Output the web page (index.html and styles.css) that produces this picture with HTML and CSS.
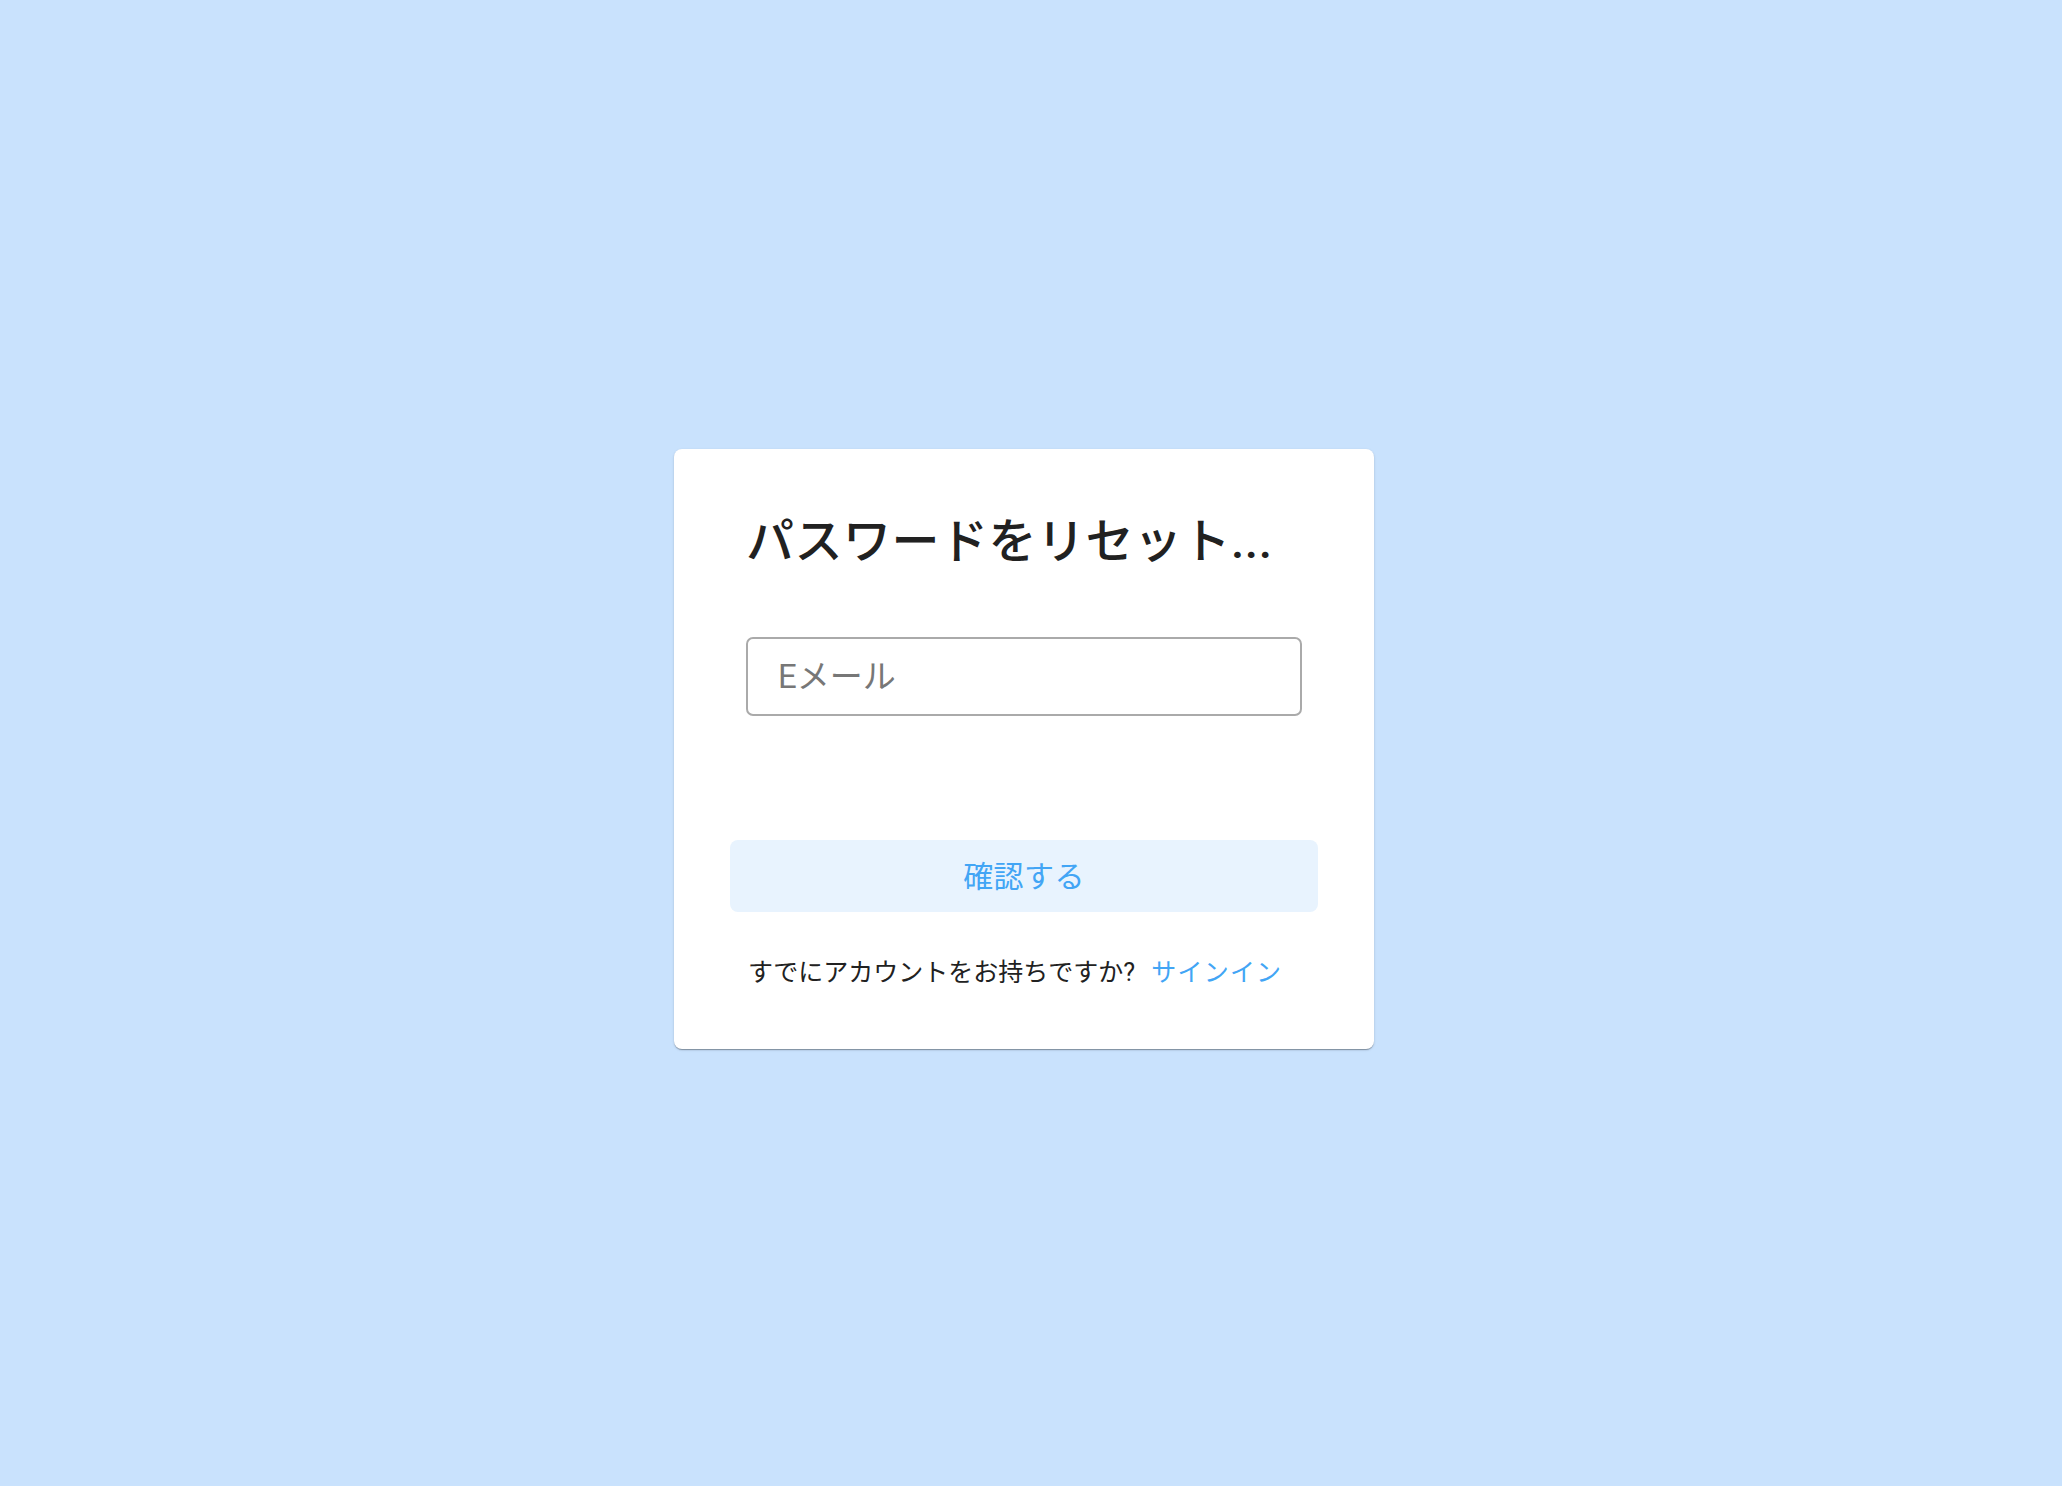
FILE: index.html
```html
<!DOCTYPE html>
<html lang="ja">
<head>
<meta charset="utf-8">
<title>パスワードをリセット</title>
<link rel="stylesheet" href="styles.css">
</head>
<body>
<main class="page">
  <section class="card">
    <h1 class="title">パスワードをリセット...</h1>
    <input class="email" type="email" placeholder="Eメール">
    <button class="confirm" type="button">確認する</button>
    <p class="signin">すでにアカウントをお持ちですか? <a class="signin-link" href="#">サインイン</a></p>
  </section>
</main>
</body>
</html>
```

FILE: styles.css
```css
* { box-sizing: border-box; }

html, body {
  margin: 0;
  padding: 0;
  background: #c9e2fd;
}

body {
  font-family: Roboto, "Noto Sans CJK JP", "Noto Sans", sans-serif;
  color: #212121;
}

.page {
  min-height: 100vh;
  display: flex;
  justify-content: center;
  align-items: center;
  padding: 11px 14px 0 0;
}

.card {
  width: 700px;
  background: #ffffff;
  border-radius: 8px;
  box-shadow: 0 2px 1px -1px rgba(0,0,0,0.2), 0 1px 1px 0 rgba(0,0,0,0.14), 0 1px 3px 0 rgba(0,0,0,0.12);
  padding: 64px 56px 58px;
  display: flex;
  flex-direction: column;
}

.title {
  margin: 0 16px;
  font-size: 48px;
  line-height: 58px;
  font-weight: 500;
  letter-spacing: 0.5px;
  color: #212121;
}

.email {
  margin: 66px 16px 0;
  height: 79px;
  border: 2px solid #aaaaaa;
  border-radius: 7px;
  padding: 0 27px 0 30px;
  font-family: Roboto, "Noto Sans CJK JP", sans-serif;
  font-size: 33px;
  color: #212121;
  background: #fff;
  outline: none;
}

.email::placeholder {
  color: #777777;
  opacity: 1;
}

.confirm {
  margin-top: 124px;
  height: 72px;
  border: none;
  border-radius: 8px;
  background: #e8f3fe;
  color: #42a5f5;
  font-family: Roboto, "Noto Sans CJK JP", sans-serif;
  font-size: 30px;
  font-weight: 400;
  letter-spacing: 0.4px;
  padding: 0 0 4px;
  cursor: pointer;
}

.signin {
  margin: 43px 16px 0 18px;
  font-size: 25px;
  line-height: 36px;
  color: #212121;
}

.signin-link {
  margin-left: 10px;
  color: #42a5f5;
  text-decoration: none;
  letter-spacing: 1.2px;
}
```
